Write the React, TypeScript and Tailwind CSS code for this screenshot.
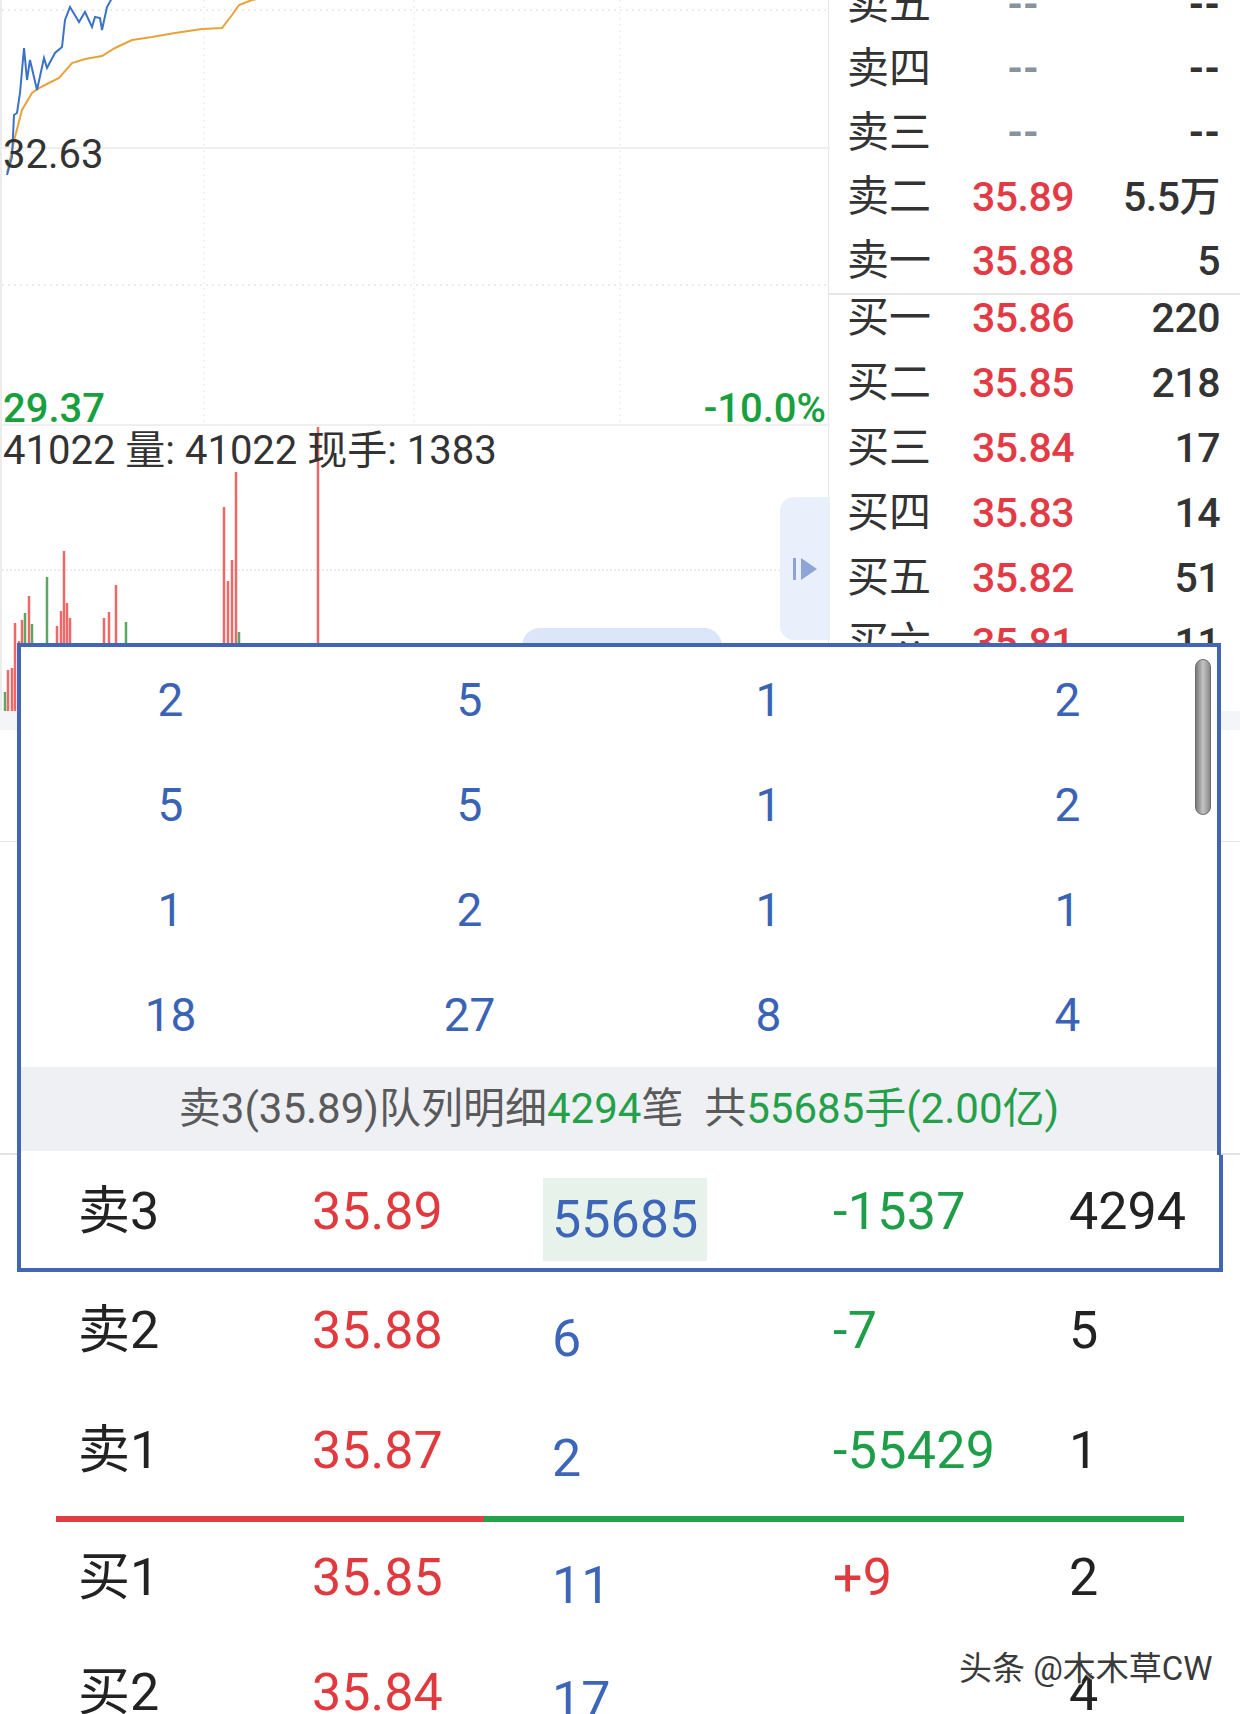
import React from "react";

const sellRows: [string, string, string][] = [
  ["卖五", "--", "--"],
  ["卖四", "--", "--"],
  ["卖三", "--", "--"],
  ["卖二", "35.89", "5.5万"],
  ["卖一", "35.88", "5"],
];
const buyRows: [string, string, string][] = [
  ["买一", "35.86", "220"],
  ["买二", "35.85", "218"],
  ["买三", "35.84", "17"],
  ["买四", "35.83", "14"],
  ["买五", "35.82", "51"],
  ["买六", "35.81", "11"],
];

const bars: [number, number, "r" | "g"][] = [
  [3, 692, "g"], [6, 670, "r"], [10, 668, "r"], [13, 623, "r"], [17, 641, "r"],
  [20, 620, "r"], [23, 613, "g"], [27, 596, "r"], [30, 624, "g"], [42, 643, "g"],
  [45, 577, "g"], [55, 626, "r"], [59, 611, "r"], [62, 551, "r"], [65, 603, "r"],
  [68, 618, "r"], [102, 618, "r"], [107, 612, "r"], [114, 585, "r"], [124, 622, "g"],
  [222, 507, "r"], [226, 581, "r"], [230, 560, "r"], [234, 472, "r"], [237, 632, "g"],
  [316, 427, "r"],
];

const grid = [
  ["2", "5", "1", "2"],
  ["5", "5", "1", "2"],
  ["1", "2", "1", "1"],
  ["18", "27", "8", "4"],
];

function BookRow({ label, price, vol }: { label: string; price: string; vol: string }) {
  const empty = price === "--";
  return (
    <div className="flex h-[64px] items-center leading-none">
      <div className="w-[134px] pl-[18px] text-[42px] text-[#333]">{label}</div>
      <div
        className={
          empty
            ? "w-[120px] text-center text-[40px] font-bold text-[#8a929c]"
            : "w-[120px] text-center text-[41px] font-medium tracking-[-0.5px] text-[#e33b45]"
        }
      >
        {price}
      </div>
      <div
        className={
          empty
            ? "flex-1 pr-[20px] text-right text-[40px] font-bold text-[#333]"
            : "flex-1 pr-[20px] text-right text-[41px] font-medium tracking-[-0.5px] text-[#333]"
        }
      >
        {vol}
      </div>
    </div>
  );
}

function Chart() {
  return (
    <div className="relative h-[711px] w-[828px] shrink-0 border-l-2 border-[#ececec]">
      <svg className="absolute left-0 top-0" width="828" height="711" viewBox="0 0 828 711">
        <line x1="0" y1="10" x2="828" y2="10" stroke="#e6e6e6" strokeWidth="1.5" strokeDasharray="2 4" />
        <line x1="0" y1="285" x2="828" y2="285" stroke="#e6e6e6" strokeWidth="1.5" strokeDasharray="2 4" />
        <line x1="0" y1="148" x2="828" y2="148" stroke="#efefef" strokeWidth="2" />
        <line x1="0" y1="425" x2="828" y2="425" stroke="#efefef" strokeWidth="2" />
        <line x1="202" y1="0" x2="202" y2="425" stroke="#efefef" strokeWidth="1.5" strokeDasharray="2 4" />
        <line x1="412" y1="0" x2="412" y2="425" stroke="#efefef" strokeWidth="1.5" strokeDasharray="2 4" />
        <line x1="618" y1="0" x2="618" y2="425" stroke="#efefef" strokeWidth="1.5" strokeDasharray="2 4" />
        <line x1="0" y1="570" x2="828" y2="570" stroke="#e8e8e8" strokeWidth="1.5" strokeDasharray="2 2" />
        <polyline
          fill="none"
          stroke="#e9a23b"
          strokeWidth="2"
          points="5,173 13,137 20,110 30,93 37,88 47,83 57,78 70,63 83,59 100,56 113,48 130,40 150,37 173,33 200,29 220,28 230,15 237,5 250,0 260,-2"
        />
        <polyline
          fill="none"
          stroke="#3b72c8"
          strokeWidth="2"
          points="5,175 10,157 12,115 15,113 18,93 22,48 25,80 28,60 35,90 42,58 45,68 53,53 60,47 63,20 68,7 77,22 83,12 90,27 93,17 98,18 100,30 105,7 110,-2"
        />
        {bars.map(([x, top, c], i) => (
          <rect key={i} x={x - 1.25} y={top} width="2.5" height={711 - top} fill={c === "r" ? "#ee6868" : "#5ea462"} />
        ))}
      </svg>
      <div className="absolute left-[1px] top-[135px] text-[40px] leading-none text-[#333]">32.63</div>
      <div className="absolute left-[1px] top-[389px] text-[40px] font-medium leading-none text-[#17a03d]">29.37</div>
      <div className="absolute right-[2px] top-[389px] text-[40px] font-medium leading-none text-[#17a03d]">-10.0%</div>
      <div className="absolute left-[1px] top-[431px] whitespace-pre text-[40px] leading-none text-[#333]">
        41022 量: 41022 现手: 1383
      </div>
      <div className="absolute left-[778px] top-[497px] flex h-[143px] w-[50px] items-center justify-start gap-[5px] rounded-l-[14px] bg-[#e9f0fb] pl-[13px]">
        <div className="h-[22px] w-[3px] bg-[#8ea4d6]" />
        <svg width="16" height="22" viewBox="0 0 16 22">
          <path d="M0 0 L16 11 L0 22 Z" fill="#8ea4d6" />
        </svg>
      </div>
      <div className="absolute left-[520px] top-[628px] h-[30px] w-[200px] rounded-t-[18px] bg-[#dbe7f9]" />
    </div>
  );
}

function OrderBook() {
  return (
    <div className="h-[711px] flex-1 overflow-hidden border-l border-[#e6e6e6]">
      <div className="-mt-[27px]">
        {sellRows.map((r) => (
          <BookRow key={r[0]} label={r[0]} price={r[1]} vol={r[2]} />
        ))}
      </div>
      <div className="h-[2px] bg-[#e6e6e6]" />
      <div className="-mt-[9px]">
        {buyRows.map((r) => (
          <div key={r[0]} className="h-[65px]">
            <BookRow label={r[0]} price={r[1]} vol={r[2]} />
          </div>
        ))}
      </div>
    </div>
  );
}

function TableRow({
  label,
  price,
  vol,
  chg,
  chgColor,
  count,
  boxed,
  h,
}: {
  label: string;
  price: string;
  vol: string;
  chg: string;
  chgColor: string;
  count: string;
  boxed?: boolean;
  h: string;
}) {
  return (
    <div
      className={
        boxed
          ? `mx-[17px] flex items-center border-x-4 border-b-4 border-[#4266b3] pl-[57px] text-[52px] leading-none ${h}`
          : `flex items-center pl-[78px] text-[52px] leading-none ${h}`
      }
    >
      <div className="w-[234px] text-[#222]">{label}</div>
      <div className="w-[231px] text-[#e03a3e]">{price}</div>
      <div className="w-[290px]">
        <div
          className={
            boxed
              ? "mt-[16px] inline-flex h-[83px] items-center bg-[#e7f3ea] px-[9px] text-[#3e66b8]"
              : "mt-[16px] px-[9px] text-[#3e66b8]"
          }
        >
          {vol}
        </div>
      </div>
      <div className="w-[236px] tracking-[0.3px]" style={{ color: chgColor }}>
        {chg}
      </div>
      <div className="flex-1 text-[#222]">{count}</div>
    </div>
  );
}

export default function App() {
  return (
    <div className="relative h-[1714px] w-[1240px] overflow-hidden bg-white font-['Roboto','Noto_Sans_CJK_SC',sans-serif]">
      <div className="flex h-[711px]">
        <Chart />
        <OrderBook />
      </div>
      <div className="h-[19px] bg-[#f4f5f7]" />
      <div className="h-[112px] border-b border-[#e6e6e6]" />
      <div className="h-[313px] border-b-2 border-[#e2e2e2]" />

      <div className="absolute left-[17px] top-[643px] flex h-[512px] w-[1204px] flex-col border-4 border-b-0 border-[#4266b3] bg-white">
        <div className="grid grid-cols-4">
          {grid.map((row, ri) =>
            row.map((v, ci) => (
              <div key={`${ri}-${ci}`} className="flex h-[105px] items-center justify-center text-[46px] leading-none text-[#3b63b5]">
                {v}
              </div>
            ))
          )}
        </div>
        <div className="flex h-[84px] items-center justify-center whitespace-pre bg-[#eef0f4] text-[42px] leading-none text-[#5a5a5a]">
          <span>卖3(35.89)队列明细</span>
          <span className="text-[#24a04a]">4294</span>
          <span>笔  共</span>
          <span className="text-[#24a04a]">55685手(2.00亿)</span>
        </div>
        <div className="absolute left-[1174px] top-[12px] h-[156px] w-[16px] rounded-full border border-[#6c6c6c] bg-gradient-to-r from-[#7a7a7a] via-[#c4c4c4] to-[#8a8a8a]" />
      </div>

      <div className="flex flex-col">
        <TableRow boxed h="h-[117px]" label="卖3" price="35.89" vol="55685" chg="-1537" chgColor="#1f9e4a" count="4294" />
        <TableRow h="h-[118px]" label="卖2" price="35.88" vol="6" chg="-7" chgColor="#1f9e4a" count="5" />
        <TableRow h="h-[122px]" label="卖1" price="35.87" vol="2" chg="-55429" chgColor="#1f9e4a" count="1" />
        <div className="mx-[56px] mt-[4px] flex h-[6px]">
          <div className="w-[428px] bg-[#e03e40]" />
          <div className="flex-1 bg-[#25a24a]" />
        </div>
        <TableRow h="h-[112px]" label="买1" price="35.85" vol="11" chg="+9" chgColor="#e03a3e" count="2" />
        <TableRow h="h-[118px]" label="买2" price="35.84" vol="17" chg="" chgColor="#1f9e4a" count="4" />
      </div>

      <div className="absolute left-[959px] top-[1652px] whitespace-pre text-[33px] leading-none text-[#3a3a3a] [text-shadow:0_0_2px_#fff,0_0_2px_#fff,1px_1px_0_#fff,-1px_-1px_0_#fff]">
        头条 @木木草CW
      </div>
    </div>
  );
}
